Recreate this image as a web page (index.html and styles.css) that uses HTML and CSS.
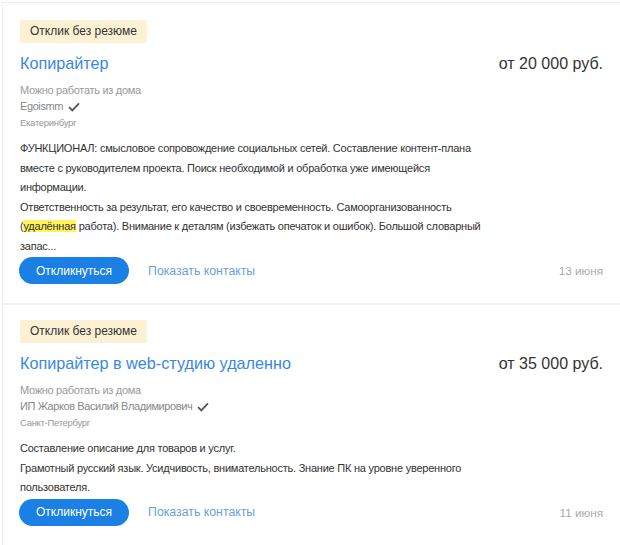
FILE: index.html
```html
<!DOCTYPE html>
<html lang="ru">
<head>
<meta charset="utf-8">
<title>Вакансии</title>
<link rel="stylesheet" href="styles.css">
</head>
<body>
<div class="list">
  <div class="card">
    <div class="badge">Отклик без резюме</div>
    <div class="head">
      <a class="title" href="#">Копирайтер</a>
      <div class="price">от 20&nbsp;000 руб.</div>
    </div>
    <div class="meta">
      <div class="remote">Можно работать из дома</div>
      <div class="company">Egoismm <svg class="check" viewBox="0 0 12 10" width="12" height="10"><path d="M1 5.2 L4.3 8.4 L11 1.4" fill="none" stroke="#555" stroke-width="1.8"/></svg></div>
      <div class="city">Екатеринбург</div>
    </div>
    <div class="desc">ФУНКЦИОНАЛ: смысловое сопровождение социальных сетей. Составление контент-плана<br>вместе с руководителем проекта. Поиск необходимой и обработка уже имеющейся<br>информации.<br>Ответственность за результат, его качество и своевременность. Самоорганизованность<br>(<span class="hl">удалённая</span> работа). Внимание к деталям (избежать опечаток и ошибок). Большой словарный<br>запас...</div>
    <div class="actions">
      <button class="btn">Откликнуться</button>
      <a class="contacts" href="#">Показать контакты</a>
      <span class="date">13 июня</span>
    </div>
  </div>
  <div class="card">
    <div class="badge">Отклик без резюме</div>
    <div class="head">
      <a class="title" href="#">Копирайтер в web-студию удаленно</a>
      <div class="price">от 35&nbsp;000 руб.</div>
    </div>
    <div class="meta">
      <div class="remote">Можно работать из дома</div>
      <div class="company">ИП Жарков Василий Владимирович <svg class="check" viewBox="0 0 12 10" width="12" height="10"><path d="M1 5.2 L4.3 8.4 L11 1.4" fill="none" stroke="#555" stroke-width="1.8"/></svg></div>
      <div class="city">Санкт-Петербург</div>
    </div>
    <div class="desc">Составление описание для товаров и услуг.<br>Грамотный русский язык. Усидчивость, внимательность. Знание ПК на уровне уверенного<br>пользователя.</div>
    <div class="actions">
      <button class="btn">Откликнуться</button>
      <a class="contacts" href="#">Показать контакты</a>
      <span class="date">11 июня</span>
    </div>
  </div>
</div>
</body>
</html>
```
FILE: styles.css
```css
html, body {
  margin: 0;
  padding: 0;
  background: #fff;
}
body {
  padding: 2px 0 0 2px;
  font-family: "Liberation Sans", Arial, sans-serif;
  color: #333;
}
.list {
  border-top: 1px solid #ececec;
  border-left: 1px solid #f0f0f0;
}
.card {
  padding: 17px 17px 19px 17px;
}
.card + .card {
  border-top: 2px solid #efefef;
  padding-top: 15px;
}
.badge {
  display: inline-block;
  background: #fcf2d3;
  color: #333;
  font-size: 12px;
  line-height: 23px;
  padding: 0 10px;
  border-radius: 2px;
}
.head {
  display: flex;
  justify-content: space-between;
  align-items: baseline;
  margin-top: 9px;
}
.title {
  font-size: 16.2px;
  line-height: 22px;
  color: #3a87e3;
  text-decoration: none;
}
.price {
  font-size: 16px;
  color: #333;
}
.meta {
  margin-top: 8px;
  color: #999;
}
.remote {
  font-size: 11px;
  letter-spacing: -0.3px;
  line-height: 16px;
}
.company {
  font-size: 11px;
  line-height: 17px;
  letter-spacing: -0.4px;
  color: #888;
  display: flex;
  align-items: center;
  gap: 5px;
}
.check {
  display: block;
}
.city {
  font-size: 9.5px;
  letter-spacing: -0.3px;
  line-height: 16px;
  color: #999;
}
.desc {
  margin-top: 8px;
  font-size: 11px;
  letter-spacing: -0.23px;
  line-height: 19.5px;
  color: #333;
}
.hl {
  background: #fff35c;
}
.actions {
  display: flex;
  align-items: center;
  margin-top: 1px;
}
.btn {
  font-family: inherit;
  font-size: 12px;
  color: #fff;
  background: #1b80e4;
  border: 0;
  border-radius: 14px;
  height: 27px;
  padding: 0 17px;
  margin-left: -1px;
}
.contacts {
  margin-left: 19px;
  font-size: 12.3px;
  color: #6aa0dc;
  text-decoration: none;
}
.date {
  margin-left: auto;
  font-size: 11.7px;
  color: #aaa;
}
```
